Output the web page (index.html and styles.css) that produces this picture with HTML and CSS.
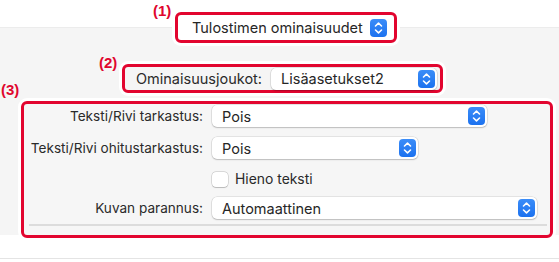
FILE: index.html
```html
<!DOCTYPE html>
<html>
<head>
<meta charset="utf-8">
<link rel="stylesheet" href="styles.css">
</head>
<body>
<div class="page">
  <div class="header">
    <span class="tag tag1">(1)</span>
    <div class="mark mark1">
      <div class="popup popup-title">
        <span class="popup-text">Tulostimen ominaisuudet</span>
        <span class="stepper"><svg width="17" height="18" viewBox="0 0 17 18"><path d="M5.5 7 L8.5 4.2 L11.5 7 M5.5 11 L8.5 13.8 L11.5 11" fill="none" stroke="#fff" stroke-width="1.6" stroke-linecap="round" stroke-linejoin="round"/></svg></span>
      </div>
    </div>
  </div>
  <div class="panel">
    <div class="row-a">
      <span class="tag tag2">(2)</span>
      <div class="mark mark2">
        <span class="label set-label">Ominaisuusjoukot:</span>
        <div class="popup popup-set">
          <span class="popup-text">Lisäasetukset2</span>
          <span class="stepper"><svg width="17" height="18" viewBox="0 0 17 18"><path d="M5.5 7 L8.5 4.2 L11.5 7 M5.5 11 L8.5 13.8 L11.5 11" fill="none" stroke="#fff" stroke-width="1.6" stroke-linecap="round" stroke-linejoin="round"/></svg></span>
        </div>
      </div>
    </div>
    <div class="row-b">
      <span class="tag tag3">(3)</span>
      <div class="mark mark3">
        <div class="form">
          <div class="frow r1">
            <span class="label col-label">Teksti/Rivi tarkastus:</span>
            <div class="popup w1">
              <span class="popup-text">Pois</span>
              <span class="stepper"><svg width="17" height="18" viewBox="0 0 17 18"><path d="M5.5 7 L8.5 4.2 L11.5 7 M5.5 11 L8.5 13.8 L11.5 11" fill="none" stroke="#fff" stroke-width="1.6" stroke-linecap="round" stroke-linejoin="round"/></svg></span>
            </div>
          </div>
          <div class="frow r2">
            <span class="label col-label">Teksti/Rivi ohitustarkastus:</span>
            <div class="popup w2">
              <span class="popup-text">Pois</span>
              <span class="stepper"><svg width="17" height="18" viewBox="0 0 17 18"><path d="M5.5 7 L8.5 4.2 L11.5 7 M5.5 11 L8.5 13.8 L11.5 11" fill="none" stroke="#fff" stroke-width="1.6" stroke-linecap="round" stroke-linejoin="round"/></svg></span>
            </div>
          </div>
          <div class="frow r3">
            <span class="col-label"></span>
            <span class="check"></span>
            <span class="label check-label">Hieno teksti</span>
          </div>
          <div class="frow r4">
            <span class="label col-label">Kuvan parannus:</span>
            <div class="popup w4">
              <span class="popup-text">Automaattinen</span>
              <span class="stepper"><svg width="17" height="18" viewBox="0 0 17 18"><path d="M5.5 7 L8.5 4.2 L11.5 7 M5.5 11 L8.5 13.8 L11.5 11" fill="none" stroke="#fff" stroke-width="1.6" stroke-linecap="round" stroke-linejoin="round"/></svg></span>
            </div>
          </div>
          <div class="sep"></div>
        </div>
      </div>
    </div>
  </div>
  <div class="footer"></div>
</div>
</body>
</html>
```
FILE: styles.css
```css
* { box-sizing: border-box; }
html, body { margin: 0; padding: 0; background: #ffffff; }
body { width: 559px; height: 262px; overflow: hidden; font-family: "Inter", "Liberation Sans", sans-serif; font-size: 13.6px; color: #2a2a2a; }
.page { display: flex; flex-direction: column; }

.tag { font-family: "Liberation Sans", Arial, sans-serif; font-weight: bold; font-size: 15px; color: #e0062e; line-height: 15px; }

.mark { border: 3px solid #e2052f; border-radius: 6px; box-shadow: 0 0 0 3px #ffffff; position: relative; z-index: 2; }

.header { height: 27px; display: flex; align-items: flex-start; padding-left: 153px; }
.tag1 { width: 22px; margin-top: 3px; }
.mark1 { margin-top: 12px; width: 222px; height: 31px; background: #ffffff; display: flex; align-items: center; justify-content: center; }

.popup { height: 22px; background: #ffffff; border-radius: 5px; box-shadow: 0 0 0 0.5px rgba(0,0,0,0.14), 0 1px 1.5px rgba(0,0,0,0.18); display: flex; align-items: center; justify-content: space-between; padding: 0 2px 0 10px; }
.popup-text { color: #262626; font-size: 14.5px; }
.stepper { width: 17px; height: 18px; border-radius: 4px; background: linear-gradient(#3b8df8, #1c72ef); display: flex; flex: none; }
.popup-title { width: 212px; box-shadow: none; padding-right: 5px; padding-left: 12px; }

.panel { height: 208px; background: #f5f5f5; border-top: 1px solid #ececec; padding-top: 27px; display: flex; flex-direction: column; }
.row-a { height: 27px; display: flex; align-items: flex-start; padding-left: 99px; }
.tag2 { width: 23px; }
.mark2 { margin-top: 9px; width: 321px; height: 29px; display: flex; align-items: center; padding-left: 11px; background: #f5f5f5; }
.set-label { font-size: 14.5px; }
.popup-set { margin-left: 9px; width: 166px; }

.row-b { display: flex; align-items: flex-start; padding-left: 1px; }
.tag3 { width: 20px; }
.mark3 { margin-top: 19px; width: 532px; height: 137px; background: #f6f6f6; }

.form { display: flex; flex-direction: column; padding-top: 1px; }
.frow { display: flex; align-items: center; height: 22px; }
.col-label { width: 179px; text-align: right; margin-right: 9px; flex: none; }
.r2 { margin-top: 10px; }
.r3 { margin-top: 9px; }
.r4 { margin-top: 7px; }
.w1 { width: 275px; }
.w2 { width: 206px; }
.w4 { width: 325px; }
.check { width: 16px; height: 15px; border-radius: 4px; background: #ffffff; box-shadow: 0 0 0 0.5px rgba(0,0,0,0.22), 0 0.5px 1px rgba(0,0,0,0.15); flex: none; }
.check-label { margin-left: 7px; font-size: 13.9px; }
.sep { margin: 5px 3px 0 5px; height: 2px; background: #dcdcdc; }

.footer { margin-top: 23px; height: 1px; background: #e4e4e4; }
```
